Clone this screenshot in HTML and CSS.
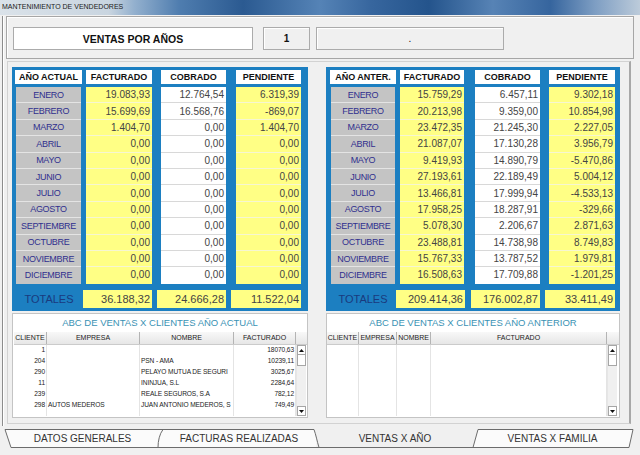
FILE: index.html
```html
<!DOCTYPE html>
<html lang="es">
<head>
<meta charset="utf-8">
<title>Mantenimiento de vendedores</title>
<link rel="stylesheet" href="styles.css">
</head>
<body>
<div class="titlebar">MANTENIMIENTO DE VENDEDORES</div>
<div class="window">
  <div class="topgroup">
    <div class="box box-title">VENTAS POR AÑOS</div>
    <div class="box box-num">1</div>
    <div class="box box-dot">.</div>
  </div>
  <div class="main">
    <div class="side left">
      <div class="blue">
        <div class="grid">
          <div class="hd m">AÑO ACTUAL</div><div class="hd f">FACTURADO</div><div class="hd c">COBRADO</div><div class="hd p">PENDIENTE</div>
          <div class="cell m">ENERO</div><div class="cell f">19.083,93</div><div class="cell c">12.764,54</div><div class="cell p">6.319,39</div>
          <div class="cell m">FEBRERO</div><div class="cell f">15.699,69</div><div class="cell c">16.568,76</div><div class="cell p">-869,07</div>
          <div class="cell m">MARZO</div><div class="cell f">1.404,70</div><div class="cell c">0,00</div><div class="cell p">1.404,70</div>
          <div class="cell m">ABRIL</div><div class="cell f">0,00</div><div class="cell c">0,00</div><div class="cell p">0,00</div>
          <div class="cell m">MAYO</div><div class="cell f">0,00</div><div class="cell c">0,00</div><div class="cell p">0,00</div>
          <div class="cell m">JUNIO</div><div class="cell f">0,00</div><div class="cell c">0,00</div><div class="cell p">0,00</div>
          <div class="cell m">JULIO</div><div class="cell f">0,00</div><div class="cell c">0,00</div><div class="cell p">0,00</div>
          <div class="cell m">AGOSTO</div><div class="cell f">0,00</div><div class="cell c">0,00</div><div class="cell p">0,00</div>
          <div class="cell m">SEPTIEMBRE</div><div class="cell f">0,00</div><div class="cell c">0,00</div><div class="cell p">0,00</div>
          <div class="cell m">OCTUBRE</div><div class="cell f">0,00</div><div class="cell c">0,00</div><div class="cell p">0,00</div>
          <div class="cell m">NOVIEMBRE</div><div class="cell f">0,00</div><div class="cell c">0,00</div><div class="cell p">0,00</div>
          <div class="cell m last">DICIEMBRE</div><div class="cell f last">0,00</div><div class="cell c last">0,00</div><div class="cell p last">0,00</div>
        </div>
        <div class="totals">
          <div class="tl">TOTALES</div>
          <div class="tv tv1">36.188,32</div>
          <div class="tv tv2">24.666,28</div>
          <div class="tv tv3">11.522,04</div>
        </div>
      </div>
      <div class="abc">
        <div class="abc-title">ABC DE VENTAS X CLIENTES AÑO ACTUAL</div>
        <div class="tbl">
          <div class="thead">
            <div class="th">CLIENTE</div><div class="th">EMPRESA</div><div class="th">NOMBRE</div><div class="th">FACTURADO</div><div class="th th-sb"></div>
          </div>
          <div class="tbody">
            <div class="col col1 num">
              <div class="td">1</div><div class="td">204</div><div class="td">290</div><div class="td">11</div><div class="td">239</div><div class="td">298</div>
            </div>
            <div class="col col2">
              <div class="td"></div><div class="td"></div><div class="td"></div><div class="td"></div><div class="td"></div><div class="td">AUTOS MEDEROS</div>
            </div>
            <div class="col col3">
              <div class="td"></div><div class="td">PSN - AMA</div><div class="td">PELAYO MUTUA DE SEGURI</div><div class="td">ININJUA, S.L</div><div class="td">REALE SEGUROS, S.A</div><div class="td">JUAN ANTONIO MEDEROS, S</div>
            </div>
            <div class="col col4 num">
              <div class="td">18070,63</div><div class="td">10239,11</div><div class="td">3025,67</div><div class="td">2284,64</div><div class="td">782,12</div><div class="td">749,49</div>
            </div>
            <div class="sb">
              <div class="sb-btn"><svg width="5" height="3" viewBox="0 0 5 3"><path d="M0 3 L2.5 0 L5 3 Z" fill="#111"/></svg></div>
              <div class="sb-thumb"></div>
              <div class="sb-track"></div>
              <div class="sb-btn"><svg width="5" height="3" viewBox="0 0 5 3"><path d="M0 0 L2.5 3 L5 0 Z" fill="#111"/></svg></div>
            </div>
          </div>
        </div>
      </div>
    </div>

    <div class="side right">
      <div class="blue">
        <div class="grid">
          <div class="hd m">AÑO ANTER.</div><div class="hd f">FACTURADO</div><div class="hd c">COBRADO</div><div class="hd p">PENDIENTE</div>
          <div class="cell m">ENERO</div><div class="cell f">15.759,29</div><div class="cell c">6.457,11</div><div class="cell p">9.302,18</div>
          <div class="cell m">FEBRERO</div><div class="cell f">20.213,98</div><div class="cell c">9.359,00</div><div class="cell p">10.854,98</div>
          <div class="cell m">MARZO</div><div class="cell f">23.472,35</div><div class="cell c">21.245,30</div><div class="cell p">2.227,05</div>
          <div class="cell m">ABRIL</div><div class="cell f">21.087,07</div><div class="cell c">17.130,28</div><div class="cell p">3.956,79</div>
          <div class="cell m">MAYO</div><div class="cell f">9.419,93</div><div class="cell c">14.890,79</div><div class="cell p">-5.470,86</div>
          <div class="cell m">JUNIO</div><div class="cell f">27.193,61</div><div class="cell c">22.189,49</div><div class="cell p">5.004,12</div>
          <div class="cell m">JULIO</div><div class="cell f">13.466,81</div><div class="cell c">17.999,94</div><div class="cell p">-4.533,13</div>
          <div class="cell m">AGOSTO</div><div class="cell f">17.958,25</div><div class="cell c">18.287,91</div><div class="cell p">-329,66</div>
          <div class="cell m">SEPTIEMBRE</div><div class="cell f">5.078,30</div><div class="cell c">2.206,67</div><div class="cell p">2.871,63</div>
          <div class="cell m">OCTUBRE</div><div class="cell f">23.488,81</div><div class="cell c">14.738,98</div><div class="cell p">8.749,83</div>
          <div class="cell m">NOVIEMBRE</div><div class="cell f">15.767,33</div><div class="cell c">13.787,52</div><div class="cell p">1.979,81</div>
          <div class="cell m last">DICIEMBRE</div><div class="cell f last">16.508,63</div><div class="cell c last">17.709,88</div><div class="cell p last">-1.201,25</div>
        </div>
        <div class="totals">
          <div class="tl">TOTALES</div>
          <div class="tv tv1">209.414,36</div>
          <div class="tv tv2">176.002,87</div>
          <div class="tv tv3">33.411,49</div>
        </div>
      </div>
      <div class="abc">
        <div class="abc-title">ABC DE VENTAS X CLIENTES AÑO ANTERIOR</div>
        <div class="tbl">
          <div class="thead">
            <div class="th">CLIENTE</div><div class="th">EMPRESA</div><div class="th">NOMBRE</div><div class="th">FACTURADO</div><div class="th th-sb"></div>
          </div>
          <div class="tbody">
            <div class="col col1"></div>
            <div class="col col2"></div>
            <div class="col col3"></div>
            <div class="col col4"></div>
            <div class="sb">
              <div class="sb-btn"><svg width="5" height="3" viewBox="0 0 5 3"><path d="M0 3 L2.5 0 L5 3 Z" fill="#111"/></svg></div>
              <div class="sb-thumb"></div>
              <div class="sb-track"></div>
              <div class="sb-btn"><svg width="5" height="3" viewBox="0 0 5 3"><path d="M0 0 L2.5 3 L5 0 Z" fill="#111"/></svg></div>
            </div>
          </div>
        </div>
      </div>
    </div>
  </div>
</div>
<div class="tabs">
  <svg class="tab-shapes" width="640" height="21" viewBox="0 0 640 21">
    <path d="M5 1.5 L163 1.5 C159.5 6 158 13 158 19.5 L11 19.5 Z" fill="#fbfbfb"/>
    <path d="M163 1.5 L314 1.5 C316 7 317 13 316 19.5 L158 19.5 C158 13 159.5 6 163 1.5 Z" fill="#fbfbfb"/>
    <path d="M478 1.5 L633 1.5 L629 19.5 L473 19.5 Z" fill="#fbfbfb"/>
    <path d="M5 1.5 L314 1.5 M5 1.5 L11 19.5 L629 19.5 M163 1.5 C159.5 6 158 13 158 19.5 M314 1.5 C316 7 317 13 319 19.5 M473 19.5 L478 1.5 L633 1.5 L629 19.5" fill="none" stroke="#6c6c6c" stroke-width="1"/>
  </svg>
  <div class="tab tab1">DATOS GENERALES</div>
  <div class="tab tab2">FACTURAS REALIZADAS</div>
  <div class="tab tab3">VENTAS X AÑO</div>
  <div class="tab tab4">VENTAS X FAMILIA</div>
</div>
</body>
</html>
```

FILE: styles.css
```css
* { box-sizing: border-box; }

body {
  margin: 0;
  width: 640px;
  height: 455px;
  overflow: hidden;
  background: #f0f0f0;
  font-family: "Liberation Sans", Arial, sans-serif;
  color: #222;
}

.titlebar {
  height: 15px;
  padding: 2px 0 0 2px;
  font-size: 7px;
  line-height: 9px;
  color: #1b1b1b;
  white-space: nowrap;
  background: linear-gradient(90deg, #dae2e9 0%, #c9d5e0 17%, #93b0ce 21%, #4f7daf 28%, #2b5a91 38%, #5583b6 50%, #37669e 58%, #24548c 67%, #5783b5 77%, #36659e 86%, #7e9ec3 93%, #bccbda 100%);
}

.window {
  margin-left: 2px;
  height: 410px;
  border-left: 1px solid #8c8c8c;
  padding-left: 3px;
  box-shadow: inset 1px 0 0 #ffffff;
}

.topgroup {
  margin-top: 1px;
  width: 628px;
  height: 43px;
  display: flex;
  align-items: flex-start;
  padding: 10px 0 0 6px;
  border: 1px solid #a6a6a6;
  box-shadow: inset 1px 1px 0 #ffffff;
}

.box {
  height: 23px;
  display: flex;
  align-items: center;
  justify-content: center;
  border: 1px solid #ababab;
  color: #111;
}

.box-title {
  width: 240px;
  background: #ffffff;
  font-weight: bold;
  font-size: 10.5px;
}

.box-num {
  width: 47px;
  margin-left: 10px;
  background: #f0f0f0;
  font-size: 10px;
  font-weight: bold;
  box-shadow: inset 1px 1px 0 #ffffff;
}

.box-dot {
  width: 188px;
  margin-left: 6px;
  background: #f0f0f0;
  font-size: 10px;
  box-shadow: inset 1px 1px 0 #ffffff;
}

.main {
  margin: 2px 0 0 1px;
  width: 624px;
  height: 363px;
  display: flex;
  padding: 5px 0 0 4px;
  border: 1px solid #d2d2d2;
  border-right: 2px solid #a8a8a8;
}

.side { flex: none; }
.side.left { width: 296px; }
.side.right { width: 294px; margin-left: 18px; }

.blue {
  height: 244px;
  background: #1c7fc1;
  padding: 3px 0 0 3px;
}
.right .blue { padding-left: 4px; }

.grid {
  display: grid;
  grid-template-rows: 17px repeat(12, 16.4px);
}
.left .grid { grid-template-columns: 67px 4px 66px 9px 65px 10px 65px; }
.right .grid { grid-template-columns: 66px 4px 64px 11px 65px 9px 66px; }

.m { grid-column: 1; }
.f { grid-column: 3; }
.c { grid-column: 5; }
.p { grid-column: 7; }

.hd {
  height: 14px;
  align-self: start;
  background: #ffffff;
  font-weight: bold;
  font-size: 9px;
  color: #111;
  display: flex;
  align-items: center;
  justify-content: center;
  white-space: nowrap;
}

.cell {
  display: flex;
  align-items: center;
  justify-content: flex-end;
  padding-right: 2px;
  font-size: 10px;
  color: #444;
  border-bottom: 1px solid #dadada;
  white-space: nowrap;
}

.cell.m {
  margin: 0 1px;
  justify-content: center;
  padding-right: 0;
  background: #c4c4c4;
  color: #30308e;
  font-size: 9px;
  letter-spacing: -0.3px;
  border-bottom-color: #e4e4e4;
}

.cell.f, .cell.p {
  background: #ffff85;
  border-bottom-color: #f6f6d2;
}

.cell.c {
  background: #ffffff;
  border-bottom-color: #d8d8d8;
}

.cell.last { border-bottom-color: transparent; }

.totals {
  display: grid;
  height: 18px;
  margin-top: 6px;
}
.left .totals { grid-template-columns: 68px 69px 5px 69px 5px 70px; }
.right .totals { grid-template-columns: 66px 69px 6px 69px 5px 70px; }

.tl {
  grid-column: 1;
  text-align: center;
  line-height: 18px;
  font-size: 11px;
  color: #1a3a7e;
}

.tv {
  background: #ffff85;
  text-align: right;
  padding-right: 2px;
  line-height: 18px;
  font-size: 11px;
  color: #444;
}
.tv1 { grid-column: 2; }
.tv2 { grid-column: 4; }
.tv3 { grid-column: 6; }

.abc {
  margin-top: 2px;
  height: 105px;
  background: #ffffff;
  border: 1px solid #c4c4c4;
}

.abc-title {
  height: 18px;
  line-height: 18px;
  text-align: center;
  font-size: 9.5px;
  color: #3a92b4;
  white-space: nowrap;
}

.tbl { margin-left: 1px; }
.right .tbl { margin-left: 0; }

.thead {
  display: flex;
  height: 13px;
  background: linear-gradient(#f8f8f8, #e6e6e6);
  border-bottom: 1px solid #cbcbcb;
}

.th {
  font-size: 7px;
  line-height: 12px;
  text-align: center;
  color: #222;
  border-right: 1px solid #b4b4b4;
  white-space: nowrap;
  overflow: hidden;
}

.left .th:nth-child(1), .left .col1 { width: 33px; }
.left .th:nth-child(2), .left .col2 { width: 93px; }
.left .th:nth-child(3), .left .col3 { width: 94px; }
.left .th:nth-child(4), .left .col4 { width: 62px; }
.right .th:nth-child(1), .right .col1 { width: 32px; }
.right .th:nth-child(2), .right .col2 { width: 38px; }
.right .th:nth-child(3), .right .col3 { width: 34px; }
.right .th:nth-child(4), .right .col4 { width: 176px; }
.th-sb { width: 10px; border-right: none; }

.tbody {
  display: flex;
  height: 71px;
}

.col {
  flex: none;
  border-right: 1px solid #e4e4e4;
  overflow: hidden;
}

.td {
  height: 11px;
  line-height: 9px;
  font-size: 6.6px;
  letter-spacing: -0.1px;
  color: #222;
  padding-left: 1px;
  white-space: nowrap;
}

.col.num .td {
  text-align: right;
  padding: 0 1px 0 0;
}

.sb {
  width: 10px;
  display: flex;
  flex-direction: column;
  background: #f0f0f0;
  border-left: 1px solid #e6e6e6;
}

.sb-btn {
  height: 10px;
  background: #ffffff;
  border: 1px solid #a6a6a6;
  display: flex;
  align-items: center;
  justify-content: center;
}

.sb-thumb {
  height: 11px;
  background: #ffffff;
  border: 1px solid #a6a6a6;
  border-top: none;
}

.sb-track { flex: 1; }

.tabs {
  position: relative;
  z-index: 0;
  margin-top: 2px;
  height: 21px;
  display: flex;
}

.tab-shapes {
  position: absolute;
  left: 0;
  top: 0;
  z-index: -1;
}

.tab {
  height: 21px;
  line-height: 21px;
  text-align: center;
  font-size: 10px;
  color: #333;
  white-space: nowrap;
}
.tab1 { width: 155px; margin-left: 5px; }
.tab2 { width: 158px; }
.tab3 { width: 154px; }
.tab4 { width: 161px; }
```
